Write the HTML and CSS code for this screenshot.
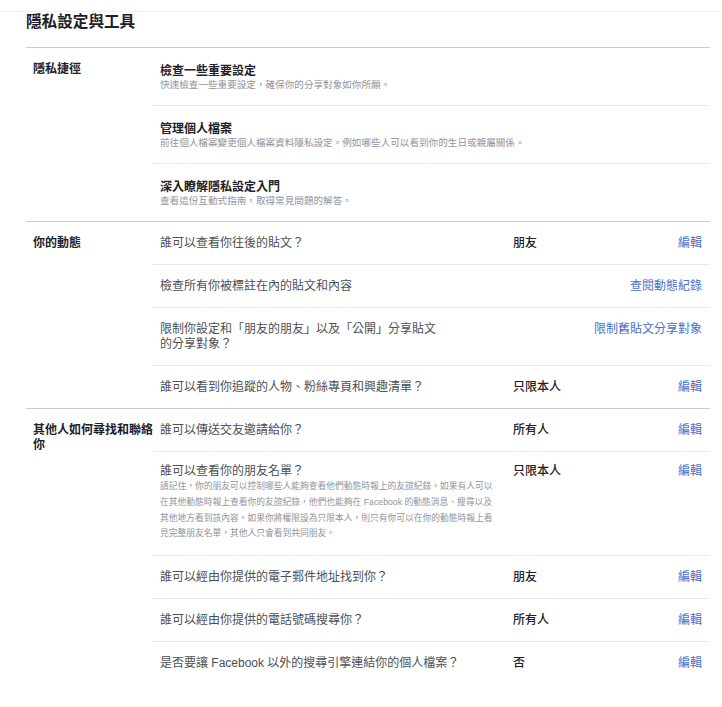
FILE: index.html
```html
<!DOCTYPE html>
<html lang="zh-Hant">
<head>
<meta charset="utf-8">
<title>隱私設定與工具</title>
<link rel="stylesheet" href="styles.css">
</head>
<body>
<div class="page">
  <div class="content">
    <h1 class="title">隱私設定與工具</h1>

    <section class="group">
      <div class="label">隱私捷徑</div>
      <div class="rows">
        <div class="row shortcut">
          <div class="s-title">檢查一些重要設定</div>
          <div class="s-desc">快速檢查一些重要設定，確保你的分享對象如你所願。</div>
        </div>
        <div class="row shortcut">
          <div class="s-title">管理個人檔案</div>
          <div class="s-desc">前往個人檔案變更個人檔案資料隱私設定。例如哪些人可以看到你的生日或親屬關係。</div>
        </div>
        <div class="row shortcut">
          <div class="s-title">深入瞭解隱私設定入門</div>
          <div class="s-desc">查看這份互動式指南，取得常見問題的解答。</div>
        </div>
      </div>
    </section>

    <section class="group">
      <div class="label">你的動態</div>
      <div class="rows">
        <div class="row setting">
          <div class="text">誰可以查看你往後的貼文？</div>
          <div class="value">朋友</div>
          <a class="link" href="#">編輯</a>
        </div>
        <div class="row setting">
          <div class="text">檢查所有你被標註在內的貼文和內容</div>
          <div class="value"></div>
          <a class="link" href="#">查閱動態紀錄</a>
        </div>
        <div class="row setting">
          <div class="text">限制你設定和「朋友的朋友」以及「公開」分享貼文<br>的分享對象？</div>
          <div class="value"></div>
          <a class="link" href="#">限制舊貼文分享對象</a>
        </div>
        <div class="row setting">
          <div class="text">誰可以看到你追蹤的人物、粉絲專頁和興趣清單？</div>
          <div class="value">只限本人</div>
          <a class="link" href="#">編輯</a>
        </div>
      </div>
    </section>

    <section class="group">
      <div class="label">其他人如何尋找和聯絡你</div>
      <div class="rows">
        <div class="row setting">
          <div class="text">誰可以傳送交友邀請給你？</div>
          <div class="value">所有人</div>
          <a class="link" href="#">編輯</a>
        </div>
        <div class="row setting with-desc">
          <div class="text">
            <div>誰可以查看你的朋友名單？</div>
            <div class="desc">請記住，你的朋友可以控制哪些人能夠查看他們動態時報上的友誼紀錄。如果有人可以<br>在其他動態時報上查看你的友誼紀錄，他們也能夠在 Facebook 的動態消息、搜尋以及<br>其他地方看到該內容。如果你將權限設為只限本人，則只有你可以在你的動態時報上看<br>見完整朋友名單，其他人只會看到共同朋友。</div>
          </div>
          <div class="value">只限本人</div>
          <a class="link" href="#">編輯</a>
        </div>
        <div class="row setting">
          <div class="text">誰可以經由你提供的電子郵件地址找到你？</div>
          <div class="value">朋友</div>
          <a class="link" href="#">編輯</a>
        </div>
        <div class="row setting">
          <div class="text">誰可以經由你提供的電話號碼搜尋你？</div>
          <div class="value">所有人</div>
          <a class="link" href="#">編輯</a>
        </div>
        <div class="row setting">
          <div class="text">是否要讓 Facebook 以外的搜尋引擎連結你的個人檔案？</div>
          <div class="value">否</div>
          <a class="link" href="#">編輯</a>
        </div>
      </div>
    </section>
  </div>
</div>
</body>
</html>
```

FILE: styles.css
```css
* {
  box-sizing: border-box;
}

html, body {
  margin: 0;
  padding: 0;
  background: #ffffff;
}

body {
  font-family: "Liberation Sans", "Noto Sans CJK TC", sans-serif;
  color: #1d2129;
}

.page {
  margin-top: 11px;
  border-top: 1px solid #f0f1f3;
}

.content {
  padding: 0 12px 0 26px;
}

.title {
  margin: 0;
  padding: 0 0 15px 0;
  font-size: 15.6px;
  line-height: 20px;
  font-weight: 700;
  color: #1d2129;
}

.group {
  display: grid;
  grid-template-columns: 126px 1fr;
  border-top: 1px solid #c9ccd1;
}

.label {
  width: 128px;
  padding: 14px 0 0 7px;
  font-size: 12px;
  line-height: 15px;
  font-weight: 700;
  color: #1d2129;
}

.rows {
  display: flex;
  flex-direction: column;
}

.row {
  border-top: 1px solid #e9ebee;
}

.row:first-child {
  border-top: none;
}

.shortcut {
  padding: 15px 8px 14px 8px;
}

.s-title {
  font-size: 12px;
  line-height: 16px;
  font-weight: 700;
  color: #1d2129;
}

.s-desc {
  font-size: 9.6px;
  line-height: 12px;
  color: #90949c;
  white-space: nowrap;
}

.setting {
  display: grid;
  grid-template-columns: 353px 1fr auto;
  align-items: start;
  padding: 14px 8px 13px 8px;
  font-size: 12px;
  line-height: 15px;
}

.setting.with-desc {
  padding: 12px 8px 13px 8px;
}

.text {
  color: #4b4f56;
  white-space: nowrap;
}

.desc {
  font-size: 8.75px;
  line-height: 15.75px;
  color: #90949c;
}

.value {
  font-weight: 500;
  color: #1d2129;
}

.link {
  justify-self: end;
  color: #4770cc;
  text-decoration: none;
}
```
